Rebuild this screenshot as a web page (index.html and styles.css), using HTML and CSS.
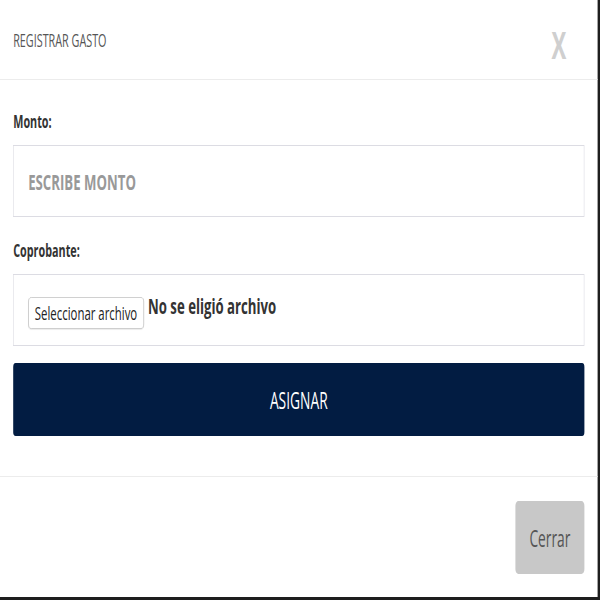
FILE: index.html
```html
<!DOCTYPE html>
<html lang="es">
<head>
<meta charset="utf-8">
<title>Registrar gasto</title>
<link rel="stylesheet" href="styles.css">
</head>
<body>
<div class="frame">
  <div class="stage">
    <div class="modal">
      <div class="modal-header">
        <h4 class="modal-title">REGISTRAR GASTO</h4>
        <button class="close" type="button">X</button>
      </div>
      <div class="modal-body">
        <div class="form-group">
          <label class="label">Monto:</label>
          <input class="field" type="text" placeholder="ESCRIBE MONTO">
        </div>
        <div class="form-group form-group-last">
          <label class="label">Coprobante:</label>
          <div class="field file-field">
            <span class="file-btn">Seleccionar archivo</span>
            <span class="file-name">No se eligió archivo</span>
          </div>
        </div>
        <button class="btn-primary" type="button">ASIGNAR</button>
      </div>
      <div class="modal-footer">
        <button class="btn-close" type="button">Cerrar</button>
      </div>
    </div>
  </div>
</div>
</body>
</html>
```
FILE: styles.css
```css
html, body {
  margin: 0;
  padding: 0;
  overflow: hidden;
  background: #fff;
}
.frame {
  width: 600px;
  height: 600px;
  overflow: hidden;
}
.stage {
  width: 1000px;
  height: 600px;
  transform: scaleX(0.6);
  transform-origin: 0 0;
  font-family: "Open Sans", "DejaVu Sans", sans-serif;
}
.modal {
  box-sizing: border-box;
  height: 600px;
  border-right: 4px solid #1e1e1e;
  border-bottom: 3px solid #1e1e1e;
  background: #fff;
  display: flex;
  flex-direction: column;
}
.modal-header {
  height: 80px;
  box-sizing: border-box;
  border-bottom: 1px solid #ececec;
  display: flex;
  align-items: center;
  justify-content: space-between;
  padding: 0 52px 0 22px;
}
.modal-title {
  margin: 0;
  font-size: 18px;
  font-weight: 400;
  color: #555;
  line-height: 24px;
}
.close {
  border: 0;
  background: none;
  padding: 0;
  font-family: "Open Sans", sans-serif;
  font-size: 37px;
  font-weight: 700;
  line-height: 40px;
  color: #cfcfcf;
  margin-top: 10px;
}
.modal-body {
  padding: 29px 22px 40px;
  border-bottom: 1px solid #ececec;
}
.form-group {
  display: flex;
  flex-direction: column;
  margin-bottom: 21px;
}
.form-group-last {
  margin-bottom: 17px;
}
.label {
  font-size: 18px;
  font-weight: 700;
  color: #333;
  line-height: 24px;
  margin-bottom: 12px;
}
.field {
  box-sizing: border-box;
  height: 72px;
  border: 1px solid #dcdce3;
  padding: 0 24px;
  font-family: "Open Sans", sans-serif;
  font-size: 22px;
  font-weight: 700;
  color: #333;
  background: #fff;
  outline: none;
}
.field::placeholder {
  color: #999;
}
.file-field {
  display: flex;
  align-items: flex-start;
  padding: 22px 24px 0;
}
.file-btn {
  box-sizing: border-box;
  height: 32px;
  padding: 0 10px;
  display: flex;
  align-items: center;
  border: 1px solid #c4c4c4;
  border-radius: 5px;
  font-size: 19px;
  font-weight: 400;
  color: #222;
  background: #fff;
  box-shadow: 0 1px 1px rgba(0,0,0,0.08);
}
.file-name {
  margin: -5px 0 0 7px;
  font-size: 22px;
  line-height: 26px;
  font-weight: 700;
  color: #333;
}
.btn-primary {
  display: block;
  width: 100%;
  height: 73px;
  border: 0;
  border-radius: 4px;
  background: #021c42;
  color: #fff;
  font-family: "Open Sans", sans-serif;
  font-size: 23px;
  font-weight: 400;
}
.modal-footer {
  flex: 1;
  display: flex;
  justify-content: flex-end;
  align-items: flex-start;
  padding: 24px 22px 0;
}
.btn-close {
  width: 115px;
  height: 73px;
  border: 0;
  border-radius: 5px;
  background: #c8c8c8;
  color: #555;
  font-family: "Open Sans", sans-serif;
  font-size: 23px;
  font-weight: 400;
}
```
